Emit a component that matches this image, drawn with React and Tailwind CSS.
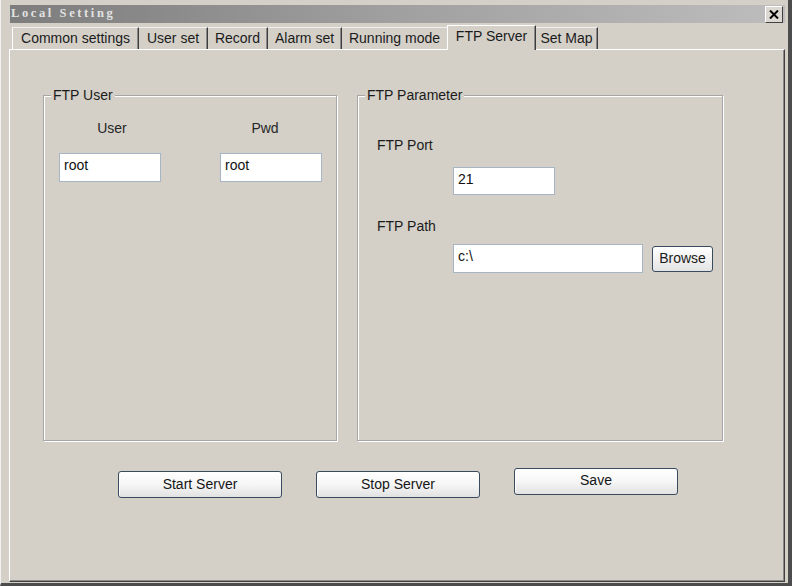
export default function App() {
  const tabs = [
    { label: "Common settings", w: "w-[127px]" },
    { label: "User set", w: "w-[69px]" },
    { label: "Record", w: "w-[60px]" },
    { label: "Alarm set", w: "w-[74px]" },
    { label: "Running mode", w: "w-[105px]", noSep: true },
  ];
  const inputCls =
    "bg-white border border-[#a7b6c6] flex items-start pt-[3px] pl-[4px] leading-[16px] text-[14px] text-[#111]";
  const btnCls =
    "h-[27px] w-[164px] border border-[#3a4b5e] rounded-[3px] bg-gradient-to-b from-white via-[#f6f6f6] to-[#e2e2e2] flex items-center justify-center text-[14px] text-[#151515] shadow-[inset_1px_1px_0_#fff]";
  const groupCls =
    "relative border border-[#a6a6a6] shadow-[inset_1px_1px_0_#fff,1px_1px_0_#fff]";
  return (
    <div className="w-[792px] h-[586px] bg-[#d4d0c8] flex flex-col font-['Liberation_Sans',Arial,sans-serif] text-[14px] text-[#1b1b1b] border-l border-l-[#f2f2f2] border-r-[4px] border-r-[#4c4c4c] border-b-[3px] border-b-[#4c4c4c] overflow-hidden">
      {/* Title bar */}
      <div className="ml-[9px] mr-[3px] mt-[5px] h-[18px] flex items-center bg-gradient-to-r from-[#7d7d7d] via-[#a0a0a0] to-[#bdbdbd]">
        <span className="pl-[1px] pb-[1px] font-['Liberation_Serif',serif] font-bold text-[12.5px] tracking-[2.6px] text-[#e2e2e2] leading-none">
          Local Setting
        </span>
        <div className="ml-auto mr-[2px] w-[18px] h-[17px] bg-[#dcd9d2] border border-t-white border-l-white border-r-[#404040] border-b-[#404040] flex items-center justify-center">
          <svg width="10" height="9" viewBox="0 0 10 9">
            <path d="M1 0.5 L9 8.5 M9 0.5 L1 8.5" stroke="#000" strokeWidth="2" />
          </svg>
        </div>
      </div>
      {/* Tabs */}
      <div className="h-[26px] ml-[11px] flex items-end">
        {tabs.map((t, i) => (
          <div
            key={t.label}
            className={`${t.w} h-[22px] flex items-center justify-center border-t border-t-[#efefef] ${
              i === 0 ? "border-l border-l-white" : ""
            } ${t.noSep ? "" : "border-r border-r-[#3c3c3c] shadow-[inset_-1px_0_0_#8a8a8a]"}`}
          >
            {t.label}
          </div>
        ))}
        <div className="relative z-10 w-[89px] h-[25px] -mb-px bg-[#d4d0c8] flex items-center justify-center pb-[3px] border-t border-l border-t-white border-l-white border-r border-r-[#3c3c3c] shadow-[inset_-1px_0_0_#8a8a8a]">
          FTP Server
        </div>
        <div className="w-[62px] h-[22px] flex items-center justify-center border-t border-t-[#efefef] border-r border-r-[#3c3c3c] shadow-[inset_-1px_0_0_#8a8a8a]">
          Set Map
        </div>
      </div>
      {/* Tab panel */}
      <div className="flex-1 ml-[8px] mr-[3px] mb-[1px] border-t border-l border-t-white border-l-white border-r border-b border-r-[#404040] border-b-[#404040] shadow-[inset_-1px_-1px_0_#8a8a8a] flex flex-col">
        <div className="flex pl-[33px] mt-[45px] gap-[20px]">
          {/* FTP User */}
          <div className={`${groupCls} w-[294px] h-[346px]`}>
            <span className="absolute left-[7px] -top-[9px] px-[2px] bg-[#d4d0c8] leading-[16px]">
              FTP User
            </span>
            <div className="flex pl-[15px] pt-[24px] gap-[59px]">
              <div className="flex flex-col w-[102px]">
                <div className="leading-[16px] text-center pl-[4px] text-[#262626]">User</div>
                <div className={`${inputCls} mt-[17px] h-[29px]`}>root</div>
              </div>
              <div className="flex flex-col w-[102px]">
                <div className="leading-[16px] text-center pr-[12px] text-[#262626]">Pwd</div>
                <div className={`${inputCls} mt-[17px] h-[29px]`}>root</div>
              </div>
            </div>
          </div>
          {/* FTP Parameter */}
          <div className={`${groupCls} w-[366px] h-[346px]`}>
            <span className="absolute left-[7px] -top-[9px] px-[2px] bg-[#d4d0c8] leading-[16px]">
              FTP Parameter
            </span>
            <div className="flex flex-col pl-[19px] pt-[41px]">
              <div className="leading-[16px]">FTP Port</div>
              <div className={`${inputCls} ml-[76px] mt-[14px] h-[28px] w-[102px]`}>21</div>
              <div className="leading-[16px] mt-[23px]">FTP Path</div>
              <div className="flex items-center ml-[76px] mt-[10px]">
                <div className={`${inputCls} h-[29px] w-[190px]`}>c:\</div>
                <div className="ml-[9px] w-[61px] h-[26px] border border-[#3a4b5e] rounded-[3px] bg-gradient-to-b from-white to-[#e4e4e4] flex items-center justify-center text-[14px]">
                  Browse
                </div>
              </div>
            </div>
          </div>
        </div>
        {/* Buttons */}
        <div className="flex items-start pl-[108px] mt-[27px] gap-[34px]">
          <div className={`${btnCls} mt-[3px]`}>Start Server</div>
          <div className={`${btnCls} mt-[3px]`}>Stop Server</div>
          <div className={`${btnCls} pb-[3px]`}>Save</div>
        </div>
      </div>
    </div>
  );
}
